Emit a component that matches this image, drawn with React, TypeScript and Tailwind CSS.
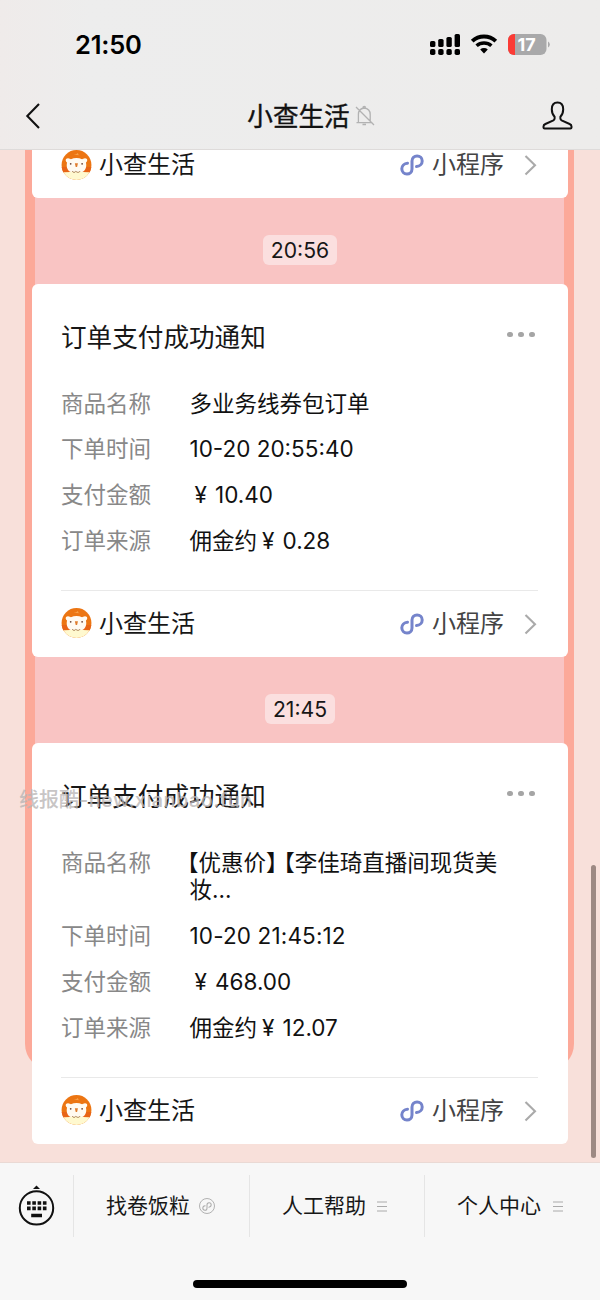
import type { ReactNode } from "react";

function StatusBar() {
  return (
    <div className="flex h-[83px] items-start pl-[75px] pr-[50px] pt-[29px]">
      <div className="flex-1 text-[25.5px] leading-[32px] font-semibold tracking-[-0.2px] text-black">21:50</div>
      <svg className="mt-[4px] h-[22px] w-[122px]" viewBox="0 0 122 22" fill="none">
        <g fill="#000">
          <rect x="2" y="8" width="5.4" height="6" rx="1.6" />
          <rect x="10.2" y="6" width="5.4" height="8" rx="1.6" />
          <rect x="18.4" y="4" width="5.4" height="10" rx="1.6" />
          <rect x="26.6" y="1" width="5.4" height="13" rx="1.6" />
          <rect x="2" y="16" width="5.4" height="6" rx="1.8" />
          <rect x="10.2" y="16" width="5.4" height="6" rx="1.8" />
          <rect x="18.4" y="16" width="5.4" height="6" rx="1.8" />
          <rect x="26.6" y="16" width="5.4" height="6" rx="1.8" />
        </g>
        <path d="M44.2 8.2a17.2 17.2 0 0 1 23.6 0" stroke="#000" strokeWidth="3.9" />
        <path d="M48.6 12.8a11 11 0 0 1 14.8 0" stroke="#000" strokeWidth="3.5" />
        <path d="M56 20.500l-3.800-3.900a5.600 5.600 0 0 1 7.600 0z" fill="#000" />
        <rect x="80" y="1" width="38.500" height="21" rx="6" fill="#a9a9aa" />
        <path d="M87 1h-1a6 6 0 0 0-6 6v9a6 6 0 0 0 6 6h1z" fill="#fb3b35" />
        <path d="M120 8.500q1.800 1 1.800 3t-1.800 3z" fill="#a9a9aa" />
        <text x="98.500" y="17.800" textAnchor="middle" fill="#fff" fontSize="18" fontWeight="700" fontFamily="Inter">17</text>
      </svg>
    </div>
  );
}

function Header() {
  return (
    <header className="h-[150px] shrink-0 border-b border-[#dedbda] bg-gradient-to-r from-[#efebea] via-[#ededed] via-15% to-[#edeceb]">
      <StatusBar />
      <div className="flex h-[66px] items-center pl-[25px] pr-[27px]">
        <svg className="h-[28px] w-[30px]" viewBox="0 0 30 28" fill="none" stroke="#111" strokeWidth="2.1">
          <path d="M14 2 2.300 14 14 26" />
        </svg>
        <div className="flex flex-1 items-center justify-center pl-[25px]">
          <h1 className="mt-[2px] text-[25.6px] leading-[32px] font-normal text-[#111] [-webkit-text-stroke:0.4px_#111]">小查生活</h1>
          <svg className="ml-[5px] h-[22px] w-[20px]" viewBox="0 0 20 22" fill="none" stroke="#b2b2b2" strokeWidth="1.3">
            <path d="M3.400 17.600V9.500c0-3.600 2.200-6 5.600-6.500 3.800.4 6.200 3 6.200 6.500v8.100M1.500 17.600h15.800M8 2.500c0-1.500 2.500-1.500 2.500 0M7.500 19.500h3.500M1 2l18 18" />
          </svg>
        </div>
        <svg className="h-[30px] w-[31px]" viewBox="0 0 31 30" fill="none" stroke="#111" strokeWidth="2" strokeLinejoin="round">
          <path d="M15.500 1.500c-3.500 0-5.700 2.600-5.700 6.800 0 3 1.100 5.800 2.800 7.500v1.800c0 .8-.4 1.400-1.200 1.800l-8 3.600c-1.400.6-1.900 1.300-1.900 2.400v1c0 .7.400 1 1.100 1h25.800c.7 0 1.100-.3 1.100-1v-1c0-1.100-.5-1.800-1.900-2.400l-8-3.600c-.8-.4-1.200-1-1.200-1.800v-1.800c1.700-1.700 2.800-4.500 2.800-7.500 0-4.200-2.200-6.800-5.700-6.800z" />
        </svg>
      </div>
    </header>
  );
}

function Avatar() {
  return (
    <svg className="mt-[-1px] h-[32px] w-[31px]" viewBox="0 0 32 32">
      <defs>
        <clipPath id="avatar-circle"><circle cx="16" cy="16" r="15.400" /></clipPath>
      </defs>
      <g clipPath="url(#avatar-circle)">
        <rect width="32" height="32" fill="#ec7512" />
        <path d="M0 18h32v6H0z" fill="#e86416" />
        <path d="M13 5.500q3-.5 4.500-2-.3 2 2 2.500z" fill="#f7a047" />
        <path d="M6.300 13.500C4 12 4.500 8.500 8 9.200c1 0 1.600.4 2.200.8 3.500-1.600 8-1.600 11.600 0 .6-.4 1.200-.8 2.200-.8 3.500-.7 4 2.800 1.700 4.300 1.300 4.500-.8 8.700-3.700 9.700H10C7 22.200 5 18 6.300 13.500z" fill="#fffaf1" />
        <path d="M0 23.500q8 0 11.500-.5h9q3.500.5 11.500.5V34H0z" fill="#fff9cf" />
        <circle cx="10" cy="14.800" r=".9" fill="#6b4031" />
        <circle cx="21.800" cy="14.800" r=".9" fill="#6b4031" />
        <path d="M14.300 14.300h3.200l-.9 3.700h-1.400z" fill="#e07c2c" />
        <path d="M11.700 22.200c.3 1.900 3 1.900 3.700.2.900 1.700 3.700 1.700 4.300-.2" fill="none" stroke="#a77d55" strokeWidth=".9" />
      </g>
    </svg>
  );
}

function MiniProgramMark({ className }: { className: string }) {
  return (
    <svg className={className} viewBox="0 0 24 22" fill="none" stroke="currentColor" strokeLinecap="round">
      <path d="M7.500 9.200C4.200 9.400 1.800 11.800 1.800 14.800c0 2.900 2.200 5.200 5.100 5.200s5.100-2.100 5.100-5V7c0-2.900 2.200-5 5.100-5s5.100 2.100 5.100 4.900c0 3-2.400 5.400-5.700 5.700" />
    </svg>
  );
}

function CardFooter() {
  return (
    <div className="flex h-[66px] items-center">
      <Avatar />
      <span className="ml-[7px] flex-1 text-[24px] leading-[32px] text-[#171717]">小查生活</span>
      <MiniProgramMark className="h-[22px] w-[24px] stroke-[3] text-[#7584cb]" />
      <span className="ml-[8px] text-[24px] leading-[32px] text-[#444]">小程序</span>
      <svg className="ml-[20px] h-[22px] w-[14px]" viewBox="0 0 14 22" fill="none" stroke="#aaa" strokeWidth="2.1">
        <path d="M1.500 2 11 11.200 1.500 20.500" />
      </svg>
    </div>
  );
}

type Row = { label: string; value: ReactNode };

function OrderCard({ rows }: { rows: Row[] }) {
  return (
    <article className="rounded-[6px] bg-white pl-[29px] pr-[30px] pt-[36px]">
      <div className="flex h-[36px] items-center justify-between">
        <h2 className="text-[25.6px] leading-[36px] text-[#171717]">订单支付成功通知</h2>
        <div className="mr-[3.500px] mb-[7px] flex gap-[5.300px]">
          <i className="size-[5.500px] rounded-full bg-[#a5a5a5]" />
          <i className="size-[5.500px] rounded-full bg-[#a5a5a5]" />
          <i className="size-[5.500px] rounded-full bg-[#a5a5a5]" />
        </div>
      </div>
      <dl className="mt-[33.600px] flex flex-col gap-[18.800px] text-[22.500px] leading-[27px]">
        {rows.map((row) => (
          <div key={row.label} className="flex">
            <dt className="w-[128.500px] shrink-0 text-[#888]">{row.label}</dt>
            <dd className="whitespace-nowrap text-[#111]">{row.value}</dd>
          </div>
        ))}
      </dl>
      <div className="mt-[36px] border-t border-[#e9e9e9]">
        <CardFooter />
      </div>
    </article>
  );
}

function TimeStamp({ children }: { children: ReactNode }) {
  return (
    <div className="flex h-[86px] items-start justify-center pt-[37px]">
      <time className="rounded-[6px] bg-[#fbdfdf] px-[8px] text-[21.200px] leading-[30px] text-[#171717]">{children}</time>
    </div>
  );
}

function Yen() {
  return <span className="mr-[3px] inline-block w-[22.500px] text-center leading-[20px]">¥</span>;
}

function Bars() {
  return (
    <svg className="h-[11px] w-[10px]" viewBox="0 0 10 11" stroke="#aaa" strokeWidth="1">
      <path d="M0 1h10M0 5.500h10M0 10h10" />
    </svg>
  );
}

function BottomMenu() {
  return (
    <footer className="flex h-[138px] shrink-0 flex-col border-t border-[#ead9d4] bg-[#f7f7f7]">
      <nav className="mt-[12px] flex h-[62px] items-center text-[21px] leading-[30px] text-[#171717]">
        <div className="flex h-full w-[73px] items-center pl-[18px]">
          <svg className="h-[42px] w-[37px]" viewBox="0 0 37 42">
            <path d="M15 4 18.500.4 22 4z" fill="#111" />
            <circle cx="18.500" cy="22.900" r="16.700" fill="none" stroke="#111" strokeWidth="2" />
            <path d="M9 16.200h3.600v3.600H9zM14.300 16.200h3.600v3.600h-3.600zM19.600 16.200h3.600v3.600h-3.600zM24.900 16.200h3.600v3.600h-3.600zM9 21.600h3.600v3.600H9zM14.300 21.600h3.600v3.600h-3.600zM19.600 21.600h3.600v3.600h-3.600zM24.900 21.600h3.600v3.600h-3.600zM13.200 28.700h10.800v3.500H13.200z" fill="#111" />
          </svg>
        </div>
        <div className="flex h-full w-[176px] items-center border-l border-[#e5e5e5] pl-[32px]">
          找卷饭粒
          <span className="ml-[9px] flex size-[16px] items-center justify-center rounded-full border border-[#b2b2b2]">
            <MiniProgramMark className="h-[9px] w-[10px] stroke-[2.500] text-[#aaa]" />
          </span>
        </div>
        <div className="flex h-full w-[175px] items-center gap-[11px] border-l border-[#e5e5e5] pl-[32px]">人工帮助<Bars /></div>
        <div className="flex h-full flex-1 items-center gap-[12px] border-l border-[#e5e5e5] pl-[32px]">个人中心<Bars /></div>
      </nav>
      <div className="mx-auto mt-auto mb-[12px] h-[8px] w-[214px] rounded-full bg-black" />
    </footer>
  );
}

const firstOrder: Row[] = [
  { label: "商品名称", value: "多业务线券包订单" },
  { label: "下单时间", value: "10-20 20:55:40" },
  { label: "支付金额", value: <><Yen />10.40</> },
  { label: "订单来源", value: <>佣金约<Yen />0.28</> },
];

const secondOrder: Row[] = [
  {
    label: "商品名称",
    value: (
      <div className="leading-[27.500px]">
        <span className="ml-[-13.500px]">【</span>优惠价】<span className="ml-[-5px]">【</span>李佳琦直播间现货美
        <br />
        妆...
      </div>
    ),
  },
  { label: "下单时间", value: <span className="tracking-[0.15px]">10-20 21:45:12</span> },
  { label: "支付金额", value: <><Yen />468.00</> },
  { label: "订单来源", value: <>佣金约<Yen />12.07</> },
];

export default function App() {
  return (
    <div className="flex h-[1300px] w-[600px] flex-col overflow-hidden bg-[#f8e0da] font-['Inter','Noto_Sans_CJK_SC',sans-serif]">
      <Header />
      <main className="relative flex-1 overflow-hidden px-[32px]">
        <div className="absolute left-[25px] top-[-30px] h-[950px] w-[549px] rounded-[26px] bg-[#fca999] px-[10px]">
          <div className="h-[880px] bg-[#f9c4c3]" />
        </div>
        <div className="relative">
          <article className="-mt-[18px] rounded-b-[6px] bg-white pl-[29px] pr-[30px]">
            <CardFooter />
          </article>
          <TimeStamp>20:56</TimeStamp>
          <OrderCard rows={firstOrder} />
          <TimeStamp>21:45</TimeStamp>
          <OrderCard rows={secondOrder} />
        </div>
        <div className="absolute left-[19px] top-[636px] whitespace-nowrap text-[20px] leading-[28px] font-medium text-[#b9b5b5]/80">线报酷<span className="tracking-[0.4px]">-new.xianbao.fun</span></div>
        <div className="absolute right-[4px] top-[715px] h-[293px] w-[5px] rounded-full bg-[#9d8983]" />
      </main>
      <BottomMenu />
    </div>
  );
}
